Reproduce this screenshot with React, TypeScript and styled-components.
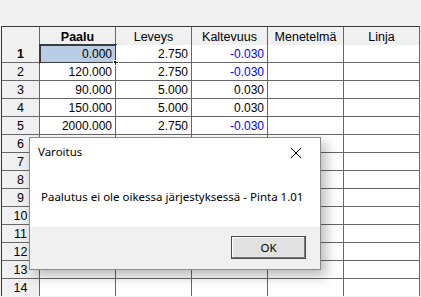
import React from "react";
import styled, { createGlobalStyle } from "styled-components";

const Global = createGlobalStyle`
  html, body { margin: 0; padding: 0; background: #f0f0f0; overflow: hidden; }
  body { width: 421px; height: 297px; font-family: "Liberation Sans", Arial, sans-serif; }
`;

const Page = styled.div`
  position: relative;
  width: 421px;
  height: 297px;
  background: #f0f0f0;
  overflow: hidden;
`;

const TopBar = styled.div`
  height: 26px;
`;

const Grid = styled.div`
  display: grid;
  grid-template-columns: 37px repeat(5, 75px);
  grid-auto-rows: 17px;
  gap: 1px;
  background: #666666;
  border-top: 1px solid #3a3a3a;
  border-left: 1px solid #3a3a3a;
  border-right: 1px solid #666666;
  margin-left: 1px;
  width: max-content;
`;

const Corner = styled.div`
  background: #f0f0f0;
  height: 20px;
`;

const HeadCell = styled.div<{ $bold?: boolean }>`
  background: #f0f0f0;
  height: 20px;
  display: flex;
  align-items: center;
  justify-content: center;
  font-size: 12.5px;
  font-weight: ${(p) => (p.$bold ? 700 : 400)};
  color: #000;
`;

const RowHead = styled.div<{ $bold?: boolean }>`
  background: #f0f0f0;
  display: flex;
  align-items: center;
  justify-content: center;
  font-size: 12.5px;
  font-weight: ${(p) => (p.$bold ? 700 : 400)};
  color: #000;
`;

const Cell = styled.div<{ $neg?: boolean; $selected?: boolean }>`
  position: relative;
  background: ${(p) => (p.$selected ? "#b9cde5" : "#fff")};
  display: flex;
  align-items: center;
  justify-content: flex-end;
  padding-right: 3px;
  font-size: 12px;
  color: ${(p) => (p.$neg ? "#0000ff" : "#000")};
`;

const SelFrame = styled.div`
  position: absolute;
  left: -1px;
  top: -1px;
  right: -2px;
  bottom: -2px;
  border: 2px solid #3b3b3b;
  pointer-events: none;
`;

const Handle = styled.div`
  position: absolute;
  right: -4px;
  bottom: -4px;
  width: 4px;
  height: 4px;
  background: #222;
  border: 1px solid #fff;
`;

const Dialog = styled.div`
  position: absolute;
  left: 29px;
  top: 137px;
  width: 290px;
  height: 131px;
  border: 1px solid #8a8a8a;
  background: #fff;
  box-shadow: 5px 6px 12px rgba(0, 0, 0, 0.28);
  display: flex;
  flex-direction: column;
  font-family: "Noto Sans", "Open Sans", sans-serif;
  font-size: 11.5px;
  color: #000;
`;

const TitleBar = styled.div`
  height: 31px;
  box-sizing: border-box;
  display: flex;
  align-items: flex-start;
  justify-content: space-between;
  padding: 6px 18px 0 8px;
`;

const CloseIcon = styled.svg`
  margin-top: 3px;
`;

const Body = styled.div`
  height: 58px;
  display: flex;
  align-items: center;
  padding-left: 11px;
  padding-bottom: 4px;
  box-sizing: border-box;
`;

const Footer = styled.div`
  flex: 1;
  background: #f0f0f0;
  display: flex;
  justify-content: flex-end;
  align-items: flex-start;
  padding-top: 9px;
  padding-right: 14px;
`;

const OkButton = styled.button`
  width: 75px;
  height: 23px;
  background: #e1e1e1;
  border: 1px solid #4a4a4a;
  box-shadow: inset -1px -1px 0 #7a7a7a, inset 1px 1px 0 #fff;
  font-family: "Noto Sans", "Open Sans", sans-serif;
  font-size: 11.5px;
  color: #000;
  padding: 0;
`;

const columns = ["Paalu", "Leveys", "Kaltevuus", "Menetelmä", "Linja"];

const data: (string | null)[][] = [
  ["0.000", "2.750", "-0.030"],
  ["120.000", "2.750", "-0.030"],
  ["90.000", "5.000", "0.030"],
  ["150.000", "5.000", "0.030"],
  ["2000.000", "2.750", "-0.030"],
];

export default function App() {
  const rows = Array.from({ length: 14 }, (_, i) => i);
  return (
    <Page>
      <Global />
      <TopBar />
      <Grid>
        <Corner />
        {columns.map((c, i) => (
          <HeadCell key={c} $bold={i === 0}>
            {c}
          </HeadCell>
        ))}
        {rows.map((r) => (
          <React.Fragment key={r}>
            <RowHead $bold={r === 0}>{r + 1}</RowHead>
            {columns.map((c, ci) => {
              const v = data[r]?.[ci] ?? "";
              const selected = r === 0 && ci === 0;
              return (
                <Cell key={c} $neg={v.startsWith("-")} $selected={selected}>
                  {v}
                  {selected && (
                    <SelFrame>
                      <Handle />
                    </SelFrame>
                  )}
                </Cell>
              );
            })}
          </React.Fragment>
        ))}
      </Grid>
      <Dialog>
        <TitleBar>
          <span>Varoitus</span>
          <CloseIcon width="12" height="12" viewBox="0 0 12 12">
            <path d="M1 1 L11 11 M11 1 L1 11" stroke="#000" strokeWidth="1" fill="none" />
          </CloseIcon>
        </TitleBar>
        <Body>Paalutus ei ole oikessa järjestyksessä - Pinta 1.01</Body>
        <Footer>
          <OkButton>OK</OkButton>
        </Footer>
      </Dialog>
    </Page>
  );
}
